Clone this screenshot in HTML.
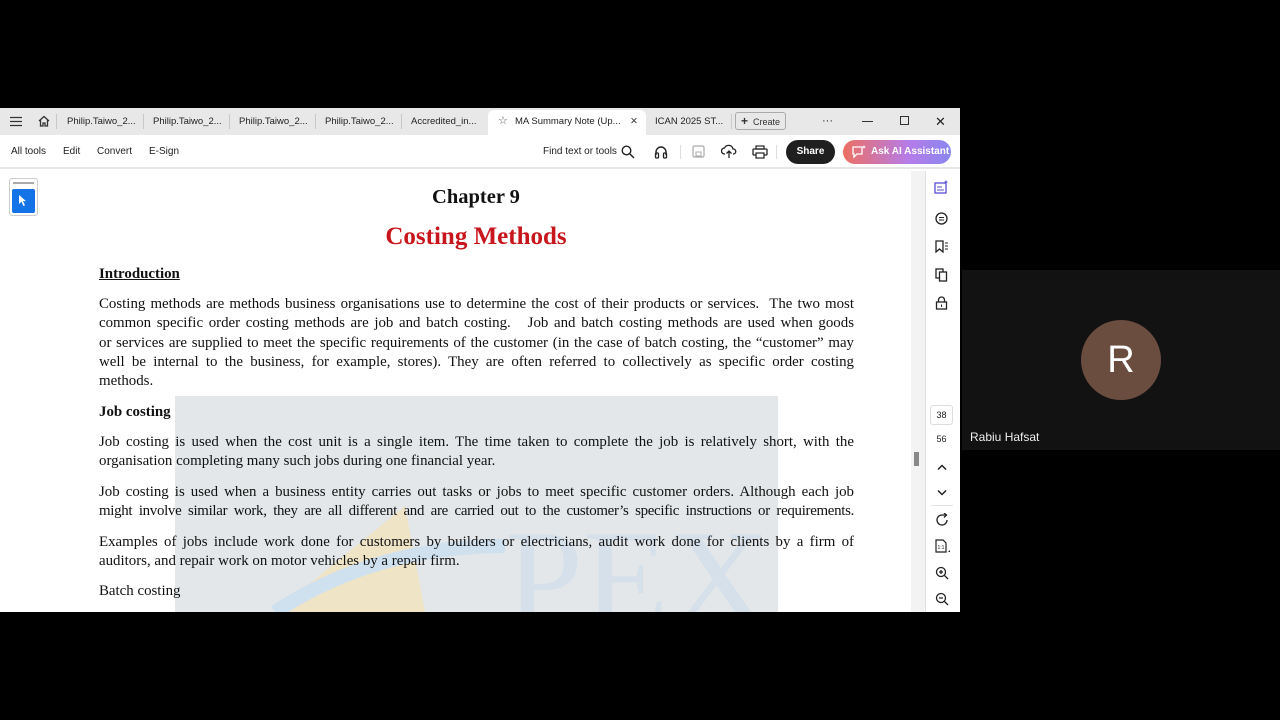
<!DOCTYPE html>
<html><head><meta charset="utf-8"><style>
*{margin:0;padding:0;box-sizing:border-box}
body{width:1280px;height:720px;background:#000;position:relative;overflow:hidden;font-family:"Liberation Sans",sans-serif}
.abs{position:absolute}
#app{left:0;top:108px;width:960px;height:504px;background:#fff;overflow:hidden}
#tabs{left:0;top:0;width:960px;height:27px;background:#e8e8e8}
.tab{position:absolute;top:0;height:27px;line-height:27px;font-size:9.5px;color:#222;white-space:nowrap}
.sep{position:absolute;top:6px;width:1px;height:15px;background:#c8c8c8}
#bar{left:0;top:27px;width:960px;height:34px;background:#fff;border-bottom:2px solid #e6e6e6}
.bt{position:absolute;top:0;line-height:34px;font-size:10px;color:#222}
.t{position:absolute;left:99px;width:755px;font-family:"Liberation Serif",serif;font-size:14.9px;color:#111;white-space:nowrap;line-height:18px}
.j{text-align:justify;text-align-last:justify;white-space:normal}
</style></head><body>
<div id="app" class="abs">
 <div id="tabs" class="abs">
  <svg class="abs" style="left:10px;top:8px" width="12" height="11"><path d="M0 1.5h12M0 5.5h12M0 9.5h12" stroke="#333" stroke-width="1.3"/></svg>
  <svg class="abs" style="left:37px;top:6px" width="14" height="14"><path d="M2 7L7 2.5 12 7M3.5 6v6h2.5v-3h2v3h2.5V6" fill="none" stroke="#333" stroke-width="1.3"/></svg>
  <div class="sep" style="left:56px"></div>
  <div class="tab" style="left:67px">Philip.Taiwo_2...</div><div class="sep" style="left:143px"></div>
  <div class="tab" style="left:153px">Philip.Taiwo_2...</div><div class="sep" style="left:229px"></div>
  <div class="tab" style="left:239px">Philip.Taiwo_2...</div><div class="sep" style="left:315px"></div>
  <div class="tab" style="left:325px">Philip.Taiwo_2...</div><div class="sep" style="left:401px"></div>
  <div class="tab" style="left:411px">Accredited_in...</div>
  <div class="abs" style="left:488px;top:2px;width:158px;height:25px;background:#fff;border-radius:6px 6px 0 0"></div>
  <div class="tab" style="left:498px;font-size:11px;color:#555">☆</div>
  <div class="tab" style="left:515px">MA Summary Note (Up...</div>
  <div class="tab" style="left:630px;color:#444">✕</div>
  <div class="tab" style="left:655px">ICAN 2025 ST...</div><div class="sep" style="left:731px"></div>
  <div class="abs" style="left:735px;top:4px;width:51px;height:18px;border:1px solid #aaa;border-radius:3px;font-size:9px;line-height:16px;color:#333;padding-left:5px"><b style="font-size:12px">+</b> &nbsp;Create</div>
  <div class="tab" style="left:822px;font-size:11px">···</div>
  <div class="abs" style="left:862px;top:13px;width:11px;height:1px;background:#333"></div>
  <div class="abs" style="left:900px;top:8px;width:9px;height:9px;border:1px solid #333"></div>
  <div class="tab" style="left:935px;font-size:13px">✕</div>
 </div>
 <div id="bar" class="abs">
  <div class="bt" style="left:11px">All tools</div>
  <div class="bt" style="left:63px">Edit</div>
  <div class="bt" style="left:97px">Convert</div>
  <div class="bt" style="left:149px">E-Sign</div>
  <div class="bt" style="left:543px">Find text or tools</div>
  <svg class="abs" style="left:621px;top:10px" width="14" height="14"><circle cx="5.5" cy="5.5" r="4.3" fill="none" stroke="#222" stroke-width="1.4"/><path d="M9 9l4 4" stroke="#222" stroke-width="1.5"/></svg>
  <svg class="abs" style="left:654px;top:10px" width="14" height="14"><path d="M2 10V7a5 5 0 0110 0v3" fill="none" stroke="#222" stroke-width="1.4"/><rect x="1.5" y="8" width="3" height="5" rx="1" fill="none" stroke="#222" stroke-width="1.3"/><rect x="9.5" y="8" width="3" height="5" rx="1" fill="none" stroke="#222" stroke-width="1.3"/></svg>
  <div class="abs" style="left:680px;top:10px;width:1px;height:14px;background:#ddd"></div>
  <svg class="abs" style="left:692px;top:10px" width="13" height="13"><rect x="1" y="1" width="11" height="11" rx="1.5" fill="none" stroke="#aaa" stroke-width="1.2"/><rect x="4" y="7" width="5" height="4" fill="none" stroke="#aaa"/></svg>
  <svg class="abs" style="left:721px;top:9px" width="16" height="15"><path d="M4 10H3.5a3 3 0 010-6 4.5 4.5 0 018.5 1 2.5 2.5 0 01.5 5H12M8 14V7M5.5 9.5L8 7l2.5 2.5" fill="none" stroke="#222" stroke-width="1.3"/></svg>
  <svg class="abs" style="left:752px;top:10px" width="16" height="14"><rect x="4" y="1" width="8" height="3" fill="none" stroke="#222" stroke-width="1.2"/><rect x="1" y="4" width="14" height="6" rx="1" fill="none" stroke="#222" stroke-width="1.3"/><rect x="4" y="8" width="8" height="5" fill="#fff" stroke="#222" stroke-width="1.2"/></svg>
  <div class="abs" style="left:776px;top:10px;width:1px;height:14px;background:#ddd"></div>
  <div class="abs" style="left:786px;top:5px;width:49px;height:24px;border-radius:12px;background:#1f1f1f;color:#fff;font-size:10px;line-height:24px;text-align:center;font-weight:bold">Share</div>
  <div class="abs" style="left:843px;top:5px;width:108px;height:24px;border-radius:12px;background:linear-gradient(90deg,#ec6f63,#b67ce8 60%,#8a86f0);color:#fff;font-size:10px;line-height:24px;padding-left:28px;font-weight:bold">Ask AI Assistant</div>
  <svg class="abs" style="left:852px;top:10px" width="14" height="14"><path d="M1 2h9v7H5l-3 3V9H1z" fill="none" stroke="#fff" stroke-width="1.3"/><path d="M12 0l.6 1.4L14 2l-1.4.6L12 4l-.6-1.4L10 2l1.4-.6z" fill="#fff"/></svg>
 </div>
 <div class="abs" style="left:9px;top:70px;width:29px;height:38px;border:1px solid #ccc;border-radius:3px;background:#fff"></div>
 <div class="abs" style="left:13px;top:74px;width:21px;height:2px;background:#aaa"></div>
 <div class="abs" style="left:12px;top:81px;width:23px;height:24px;background:#1473e6;border-radius:2px"></div>
 <svg class="abs" style="left:18px;top:86px" width="12" height="13"><path d="M1 1v9l2.5-2.3L5.5 12l1.5-.7-2-4.2H8z" fill="#fff"/></svg>
 <div class="abs" style="left:911px;top:63px;width:14px;height:441px;background:#f3f3f3"></div>
 <div class="abs" style="left:914px;top:344px;width:5px;height:14px;background:#888"></div>
 <div class="abs" style="left:925px;top:63px;width:1px;height:441px;background:#e2e2e2"></div>
 <svg class="abs" style="left:934px;top:72px" width="15" height="14"><rect x="1" y="3" width="11" height="10" fill="none" stroke="#5a4fcf" stroke-width="1.3"/><path d="M3 7h5M3 10h7" stroke="#5a4fcf"/><path d="M12 0l.6 1.4L14 2l-1.4.6L12 4l-.6-1.4L10 2l1.4-.6z" fill="#5a4fcf"/></svg>
 <svg class="abs" style="left:935px;top:104px" width="13" height="13"><circle cx="6.5" cy="6.5" r="5.5" fill="none" stroke="#222" stroke-width="1.3"/><path d="M4 5.5h5M4 8h5" stroke="#222"/></svg>
 <svg class="abs" style="left:935px;top:132px" width="14" height="13"><path d="M1 1h7v11L4.5 9 1 12z" fill="none" stroke="#222" stroke-width="1.3"/><path d="M10 3h3M10 6h3M10 9h3" stroke="#222"/></svg>
 <svg class="abs" style="left:935px;top:160px" width="13" height="14"><rect x="1" y="1" width="7" height="9" fill="none" stroke="#222" stroke-width="1.3"/><rect x="4.5" y="4" width="7" height="9" fill="#fff" stroke="#222" stroke-width="1.3"/></svg>
 <svg class="abs" style="left:935px;top:188px" width="13" height="14"><path d="M3.5 6V4a3 3 0 016 0v2" fill="none" stroke="#222" stroke-width="1.3"/><rect x="1.5" y="6" width="10" height="7" fill="none" stroke="#222" stroke-width="1.3"/><rect x="6" y="8.5" width="1" height="2.5" fill="#222"/></svg>
 <div class="abs" style="left:930px;top:297px;width:23px;height:20px;border:1px solid #ddd;border-radius:3px;font-size:9px;line-height:18px;text-align:center;color:#222">38</div>
 <div class="abs" style="left:930px;top:326px;width:23px;font-size:9px;text-align:center;color:#222">56</div>
 <svg class="abs" style="left:937px;top:356px" width="10" height="7"><path d="M1 5.5L5 1.5l4 4" fill="none" stroke="#222" stroke-width="1.5"/></svg>
 <svg class="abs" style="left:937px;top:381px" width="10" height="7"><path d="M1 1.5L5 5.5l4-4" fill="none" stroke="#222" stroke-width="1.5"/></svg>
 <div class="abs" style="left:931px;top:397px;width:22px;height:1px;background:#e2e2e2"></div>
 <svg class="abs" style="left:935px;top:405px" width="14" height="14"><path d="M12 7A5 5 0 117 2h4" fill="none" stroke="#222" stroke-width="1.3"/><path d="M9 0l2.5 2L9 4.5" fill="none" stroke="#222" stroke-width="1.3"/></svg>
 <svg class="abs" style="left:935px;top:431px" width="15" height="15"><path d="M1 1h7l3 3v9H1z" fill="none" stroke="#222" stroke-width="1.2"/><text x="2.5" y="10" font-size="5" font-family="Liberation Sans" fill="#222">1:1</text><path d="M13 13h2v-2z" fill="#222"/></svg>
 <svg class="abs" style="left:935px;top:458px" width="14" height="14"><circle cx="6" cy="6" r="4.5" fill="none" stroke="#222" stroke-width="1.3"/><path d="M9.5 9.5l3.5 3.5M4 6h4M6 4v4" stroke="#222" stroke-width="1.3"/></svg>
 <svg class="abs" style="left:935px;top:484px" width="14" height="14"><circle cx="6" cy="6" r="4.5" fill="none" stroke="#222" stroke-width="1.3"/><path d="M9.5 9.5l3.5 3.5M4 6h4" stroke="#222" stroke-width="1.3"/></svg>
</div>

<div class="abs" style="left:175px;top:396px;width:603px;height:216px;background:#e3e7e9"></div>
<svg class="abs" style="left:175px;top:396px" width="603" height="216"><path d="M100 216L230 110 250 216z" fill="#efe4c6"/><path d="M100 216Q200 150 330 150" fill="none" stroke="#cfe0ee" stroke-width="14"/><text x="330" y="230" font-family="Liberation Serif" font-size="140" fill="#d6e0ea">PEX</text></svg>
<div class="t" style="top:187px;left:0;width:952px;text-align:center;font-size:20.5px;font-weight:bold;line-height:20px">Chapter 9</div>
<div class="t" style="top:225px;left:0;width:952px;text-align:center;font-size:25px;font-weight:bold;color:#c8161d;line-height:24px">Costing Methods</div>
<div class="t" style="top:265px;font-weight:bold;text-decoration:underline">Introduction</div>
<div class="t j" style="top:295px">Costing methods are methods business organisations use to determine the cost of their products or services.&nbsp; The two most</div>
<div class="t j" style="top:314px">common specific order costing methods are job and batch costing.&nbsp;&nbsp; Job and batch costing methods are used when goods</div>
<div class="t j" style="top:334px">or services are supplied to meet the specific requirements of the customer (in the case of batch costing, the “customer” may</div>
<div class="t j" style="top:353px">well be internal to the business, for example, stores). They are often referred to collectively as specific order costing</div>
<div class="t" style="top:372px">methods.</div>
<div class="t" style="top:403px;font-weight:bold">Job costing</div>
<div class="t j" style="top:433px">Job costing is used when the cost unit is a single item. The time taken to complete the job is relatively short, with the</div>
<div class="t" style="top:452px">organisation completing many such jobs during one financial year.</div>
<div class="t j" style="top:483px">Job costing is used when a business entity carries out tasks or jobs to meet specific customer orders. Although each job</div>
<div class="t j" style="top:502px;letter-spacing:-0.3px">might involve similar work, they are all different and are carried out to the customer’s specific instructions or requirements.</div>
<div class="t j" style="top:533px">Examples of jobs include work done for customers by builders or electricians, audit work done for clients by a firm of</div>
<div class="t" style="top:552px">auditors, and repair work on motor vehicles by a repair firm.</div>
<div class="t" style="top:582px">Batch costing</div>

<div class="abs" style="left:962px;top:270px;width:318px;height:180px;background:#121212"></div>
<div class="abs" style="left:1081px;top:320px;width:80px;height:80px;border-radius:50%;background:#6b4d40;color:#fff;font-size:38px;line-height:80px;text-align:center">R</div>
<div class="abs" style="left:970px;top:430px;color:#eee;font-size:12px">Rabiu Hafsat</div>
</body></html>
